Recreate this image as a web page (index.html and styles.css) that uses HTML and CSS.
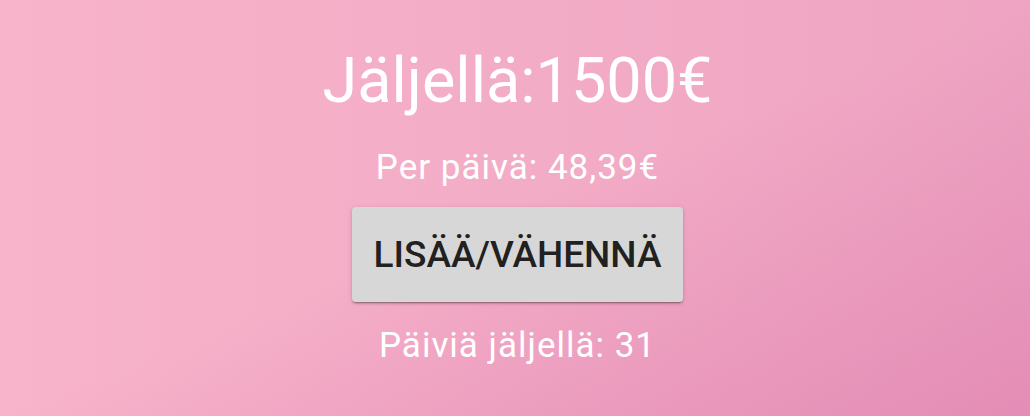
FILE: index.html
```html
<!DOCTYPE html>
<html lang="fi">
<head>
<meta charset="utf-8">
<title>Budjetti</title>
<link rel="stylesheet" href="styles.css">
</head>
<body>
<main class="app">
  <h1 class="remaining">Jäljellä:1500€</h1>
  <p class="per-day">Per päivä: 48,39€</p>
  <button class="adjust" type="button">LISÄÄ/VÄHENNÄ</button>
  <p class="days-left">Päiviä jäljellä: 31</p>
</main>
</body>
</html>
```
FILE: styles.css
```css
html, body {
  margin: 0;
  padding: 0;
  height: 100%;
}
body {
  background:
    linear-gradient(to bottom right, rgba(218, 118, 170, 0) 50%, rgba(218, 118, 170, 0.5) 100%),
    linear-gradient(to right, #f8b4ca 0%, #eea4c2 100%);
  font-family: Roboto, "Noto Sans", sans-serif;
  color: #ffffff;
  overflow: hidden;
}
.app {
  display: flex;
  flex-direction: column;
  align-items: center;
  padding-top: 43px;
  padding-left: 5px;
}
.remaining {
  margin: 0;
  font-size: 63px;
  font-weight: 400;
  line-height: 75px;
}
.per-day {
  margin: 30px 0 0;
  font-size: 35px;
  font-weight: 400;
  line-height: 40px;
  letter-spacing: 1px;
}
.adjust {
  margin-top: 19px;
  padding: 16px 22px;
  border: none;
  border-radius: 4px;
  background: #d6d7d6;
  color: rgba(0, 0, 0, 0.87);
  font-family: Roboto, "Noto Sans", sans-serif;
  font-size: 37px;
  font-weight: 500;
  letter-spacing: 0;
  line-height: 63px;
  box-shadow: 0 3px 1px -2px rgba(0,0,0,0.2), 0 2px 2px 0 rgba(0,0,0,0.14), 0 1px 5px 0 rgba(0,0,0,0.12);
  cursor: pointer;
}
.days-left {
  margin: 24px 0 0;
  font-size: 35px;
  font-weight: 400;
  line-height: 40px;
  letter-spacing: 1px;
}
```
